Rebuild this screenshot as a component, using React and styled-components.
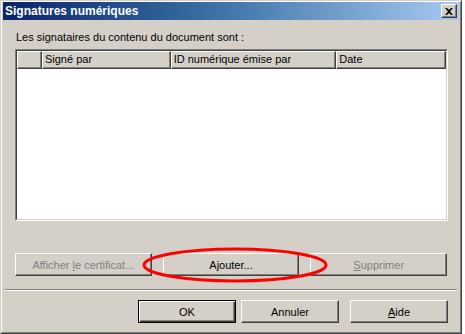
import React from "react";
import styled, { createGlobalStyle } from "styled-components";

const Global = createGlobalStyle`
  html, body { margin: 0; padding: 0; background: #ffffff; }
  body { font-family: "Liberation Sans", Arial, sans-serif; }
`;

const Page = styled.div`
  position: relative;
  width: 465px;
  height: 334px;
  overflow: hidden;
  background: #ffffff;
`;

const Window = styled.div`
  width: 462px;
  height: 334px;
  box-sizing: border-box;
  background: #d4d0c8;
  border-style: solid;
  border-width: 1px;
  border-color: #d4d0c8 #404040 #404040 #d4d0c8;
`;

const WindowInner = styled.div`
  height: 100%;
  box-sizing: border-box;
  border-style: solid;
  border-width: 1px;
  border-color: #ffffff #808080 #808080 #ffffff;
  padding: 0 1px 1px 1px;
  display: flex;
  flex-direction: column;
`;

const TitleBar = styled.div`
  height: 18px;
  display: flex;
  align-items: center;
  justify-content: space-between;
  padding: 0 2px 0 2px;
  background: linear-gradient(to right, #0a246a 0%, #3a6ea5 45%, #a6caf0 100%);
`;

const Title = styled.span`
  color: #ffffff;
  font-weight: bold;
  font-size: 12px;
`;

const CloseBox = styled.div`
  width: 16px;
  height: 14px;
  box-sizing: border-box;
  background: #d4d0c8;
  border-style: solid;
  border-width: 1px;
  border-color: #ffffff #404040 #404040 #ffffff;
  box-shadow: inset -1px -1px 0 #808080;
  display: flex;
  align-items: center;
  justify-content: center;
`;

const Body = styled.div`
  flex: 1;
  display: flex;
  flex-direction: column;
  padding: 11px 12px 0 12px;
`;

const Label = styled.div`
  font-size: 11px;
  line-height: 13px;
  color: #000;
  height: 13px;
  padding-left: 1px;
`;

const ListView = styled.div`
  margin-top: 5px;
  width: 433px;
  height: 172px;
  box-sizing: border-box;
  background: #ffffff;
  border-style: solid;
  border-width: 1px;
  border-color: #808080 #ffffff #ffffff #808080;
`;

const ListInner = styled.div`
  height: 100%;
  box-sizing: border-box;
  border-style: solid;
  border-width: 1px;
  border-color: #404040 #d4d0c8 #d4d0c8 #404040;
`;

const HeaderRow = styled.div`
  display: flex;
  height: 18px;
`;

const HeaderCell = styled.div`
  width: ${(p) => p.$w}px;
  box-sizing: border-box;
  height: 18px;
  background: #d4d0c8;
  border-style: solid;
  border-width: 1px;
  border-color: #ffffff #404040 #404040 #ffffff;
  box-shadow: inset -1px -1px 0 #808080;
  font-size: 11px;
  line-height: 15px;
  padding-left: 2px;
  color: #000;
  white-space: nowrap;
  overflow: hidden;
`;

const ButtonRow = styled.div`
  margin-top: 32px;
  display: flex;
  gap: 11px;
`;

const Button = styled.div`
  width: ${(p) => p.$w || 137}px;
  height: 23px;
  box-sizing: border-box;
  background: #d4d0c8;
  border-style: solid;
  border-width: 1px;
  border-color: ${(p) =>
    p.$default ? "#000 #000 #000 #000" : "#ffffff #404040 #404040 #ffffff"};
  box-shadow: ${(p) =>
    p.$default
      ? "inset 1px 1px 0 #ffffff, inset -1px -1px 0 #404040, inset -2px -2px 0 #808080"
      : "inset -1px -1px 0 #808080"};
  display: flex;
  align-items: center;
  justify-content: center;
  font-size: 11px;
  color: ${(p) => (p.$disabled ? "#808080" : "#000")};
  margin-left: ${(p) => p.$ml || 0}px;
`;

const Caption = styled.span`
  white-space: pre;
`;

const Separator = styled.div`
  margin: 13px -10px 0 -10px;
  height: 2px;
  border-top: 1px solid #808080;
  border-bottom: 1px solid #ffffff;
  box-sizing: border-box;
`;

const FooterRow = styled.div`
  margin-top: 9px;
  display: flex;
  justify-content: flex-end;
  width: 433px;
`;

const Mn = styled.span`
  text-decoration: underline;
`;

const Ellipse = styled.svg`
  position: absolute;
  left: 142px;
  top: 247px;
  pointer-events: none;
`;

export default function App() {
  return (
    <Page>
      <Global />
      <Window>
        <WindowInner>
          <TitleBar>
            <Title>Signatures numériques</Title>
            <CloseBox>
              <svg width="8" height="7" viewBox="0 0 8 7">
                <path d="M0 0 L2 0 L4 2 L6 0 L8 0 L5 3.5 L8 7 L6 7 L4 5 L2 7 L0 7 L3 3.5 Z" fill="#000" />
              </svg>
            </CloseBox>
          </TitleBar>
          <Body>
            <Label>Les signataires du contenu du document sont :</Label>
            <ListView>
              <ListInner>
                <HeaderRow>
                  <HeaderCell $w={25} />
                  <HeaderCell $w={129}>Signé par</HeaderCell>
                  <HeaderCell $w={166}>ID numérique émise par</HeaderCell>
                  <HeaderCell $w={110}>Date</HeaderCell>
                </HeaderRow>
              </ListInner>
            </ListView>
            <ButtonRow>
              <Button $disabled>
                <Caption>
                  {"Afficher "}<Mn>l</Mn>{"e certificat..."}
                </Caption>
              </Button>
              <Button>
                <Caption>
                  A<Mn>j</Mn>outer...
                </Caption>
              </Button>
              <Button $disabled>
                <Caption>
                  <Mn>S</Mn>upprimer
                </Caption>
              </Button>
            </ButtonRow>
            <Separator />
            <FooterRow>
              <Button $w={98} $default>OK</Button>
              <Button $w={98} $ml={5}>Annuler</Button>
              <Button $w={98} $ml={11}>
                <Caption>
                  <Mn>A</Mn>ide
                </Caption>
              </Button>
            </FooterRow>
          </Body>
        </WindowInner>
      </Window>
      <Ellipse width="186" height="36" viewBox="0 0 186 36">
        <ellipse cx="93" cy="18" rx="91" ry="16" fill="none" stroke="#ff0000" strokeWidth="3" />
      </Ellipse>
    </Page>
  );
}
